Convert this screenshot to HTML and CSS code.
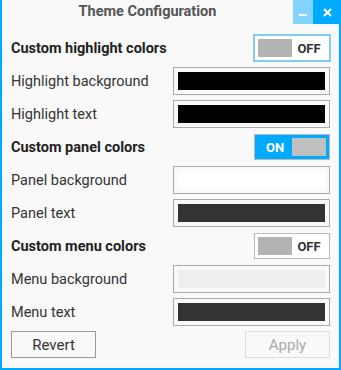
FILE: index.html
```html
<!DOCTYPE html>
<html lang="en">
<head>
    <meta charset="UTF-8">
    <meta name="viewport" content="width=device-width, initial-scale=1.0">
    <title>Theme Configuration</title>
    <link rel="stylesheet" href="styles.css">
</head>
<body>

<div class="window">
    <div class="titlebar">
        <div class="title">Theme Configuration</div>
        <div class="win-btn minimize">
            <svg width="8" height="2" viewBox="0 0 8 2"><rect width="8" height="2" fill="#fff"/></svg>
        </div>
        <div class="win-btn close">
            <svg width="9" height="9" viewBox="0 0 9 9"><path d="M1 1L8 8M8 1L1 8" stroke="#fff" stroke-width="2.2"/></svg>
        </div>
    </div>

    <div class="content">
        <div class="form">
            <label class="heading">Custom highlight colors</label>
            <div class="toggle off focus"><span class="knob"></span><span class="state">OFF</span></div>

            <label>Highlight background</label>
            <div class="field"><div class="swatch" style="background:#000000"></div></div>

            <label>Highlight text</label>
            <div class="field"><div class="swatch" style="background:#000000"></div></div>

            <label class="heading">Custom panel colors</label>
            <div class="toggle on"><span class="state">ON</span><span class="knob"></span></div>

            <label>Panel background</label>
            <div class="field"><div class="swatch" style="background:#ffffff"></div></div>

            <label>Panel text</label>
            <div class="field"><div class="swatch" style="background:#333333"></div></div>

            <label class="heading">Custom menu colors</label>
            <div class="toggle off"><span class="knob"></span><span class="state">OFF</span></div>

            <label>Menu background</label>
            <div class="field"><div class="swatch" style="background:#eeeeee"></div></div>

            <label>Menu text</label>
            <div class="field"><div class="swatch" style="background:#333333"></div></div>
        </div>

        <div class="actions">
            <button type="button">Revert</button>
            <button type="button" disabled>Apply</button>
        </div>
    </div>
</div>

</body>
</html>
```

FILE: styles.css
```css
* {
    box-sizing: border-box;
}
body {
    margin: 0;
    font-family: Roboto, "Liberation Sans", sans-serif;
    font-size: 14.5px;
    color: #333;
    background: #f9f9f9;
}
.window {
    width: 341px;
    height: 370px;
    border: 2px solid #00aaff;
    border-top: none;
    background: #f9f9f9;
}
.titlebar {
    display: flex;
    height: 24px;
    margin-right: -2px;
}
.title {
    flex: 1;
    text-align: center;
    line-height: 24px;
    font-weight: bold;
    color: #555;
}
.win-btn {
    display: flex;
    align-items: center;
    justify-content: center;
}
.minimize {
    width: 20px;
    background: #80d4ff;
    padding-top: 6px;
}
.close {
    width: 28px;
    background: #00aaff;
}
.content {
    padding: 10px 9px 0 9px;
}
.form {
    display: grid;
    grid-template-columns: 1fr 157px;
    grid-auto-rows: 28px;
    row-gap: 5px;
    align-items: center;
}
.form label {
    color: #333;
}
.form label.heading {
    font-weight: bold;
    color: #222;
}
.toggle {
    justify-self: end;
    display: flex;
    align-items: center;
    width: 76px;
    height: 26px;
    padding: 3px;
    border: 1px solid #bbb;
    font-size: 13px;
    font-weight: bold;
}
.toggle .knob {
    width: 34px;
    height: 18px;
}
.toggle .state {
    flex: 1;
    text-align: center;
}
.toggle.off {
    background: #fff;
    color: #333;
}
.toggle.off .knob {
    background: #b3b3b3;
}
.toggle.on {
    background: #00aaff;
    color: #fff;
}
.toggle.on .knob {
    background: #c0c0c0;
}
.toggle.focus {
    border-color: #80ccf0;
    box-shadow: 0 0 0 1px #80ccf0;
}
.field {
    height: 28px;
    padding: 4px;
    border: 1px solid #aaa;
    background: #f9f9f9;
}
.swatch {
    height: 100%;
}
.actions {
    display: flex;
    justify-content: space-between;
    margin-top: 5px;
}
button {
    width: 85px;
    height: 27px;
    border: 1px solid #999;
    background: #f9f9f9;
    font-family: Roboto, "Liberation Sans", sans-serif;
    font-size: 15px;
    color: #333;
}
button:disabled {
    border-color: #ddd;
    color: #aaa;
}
```
